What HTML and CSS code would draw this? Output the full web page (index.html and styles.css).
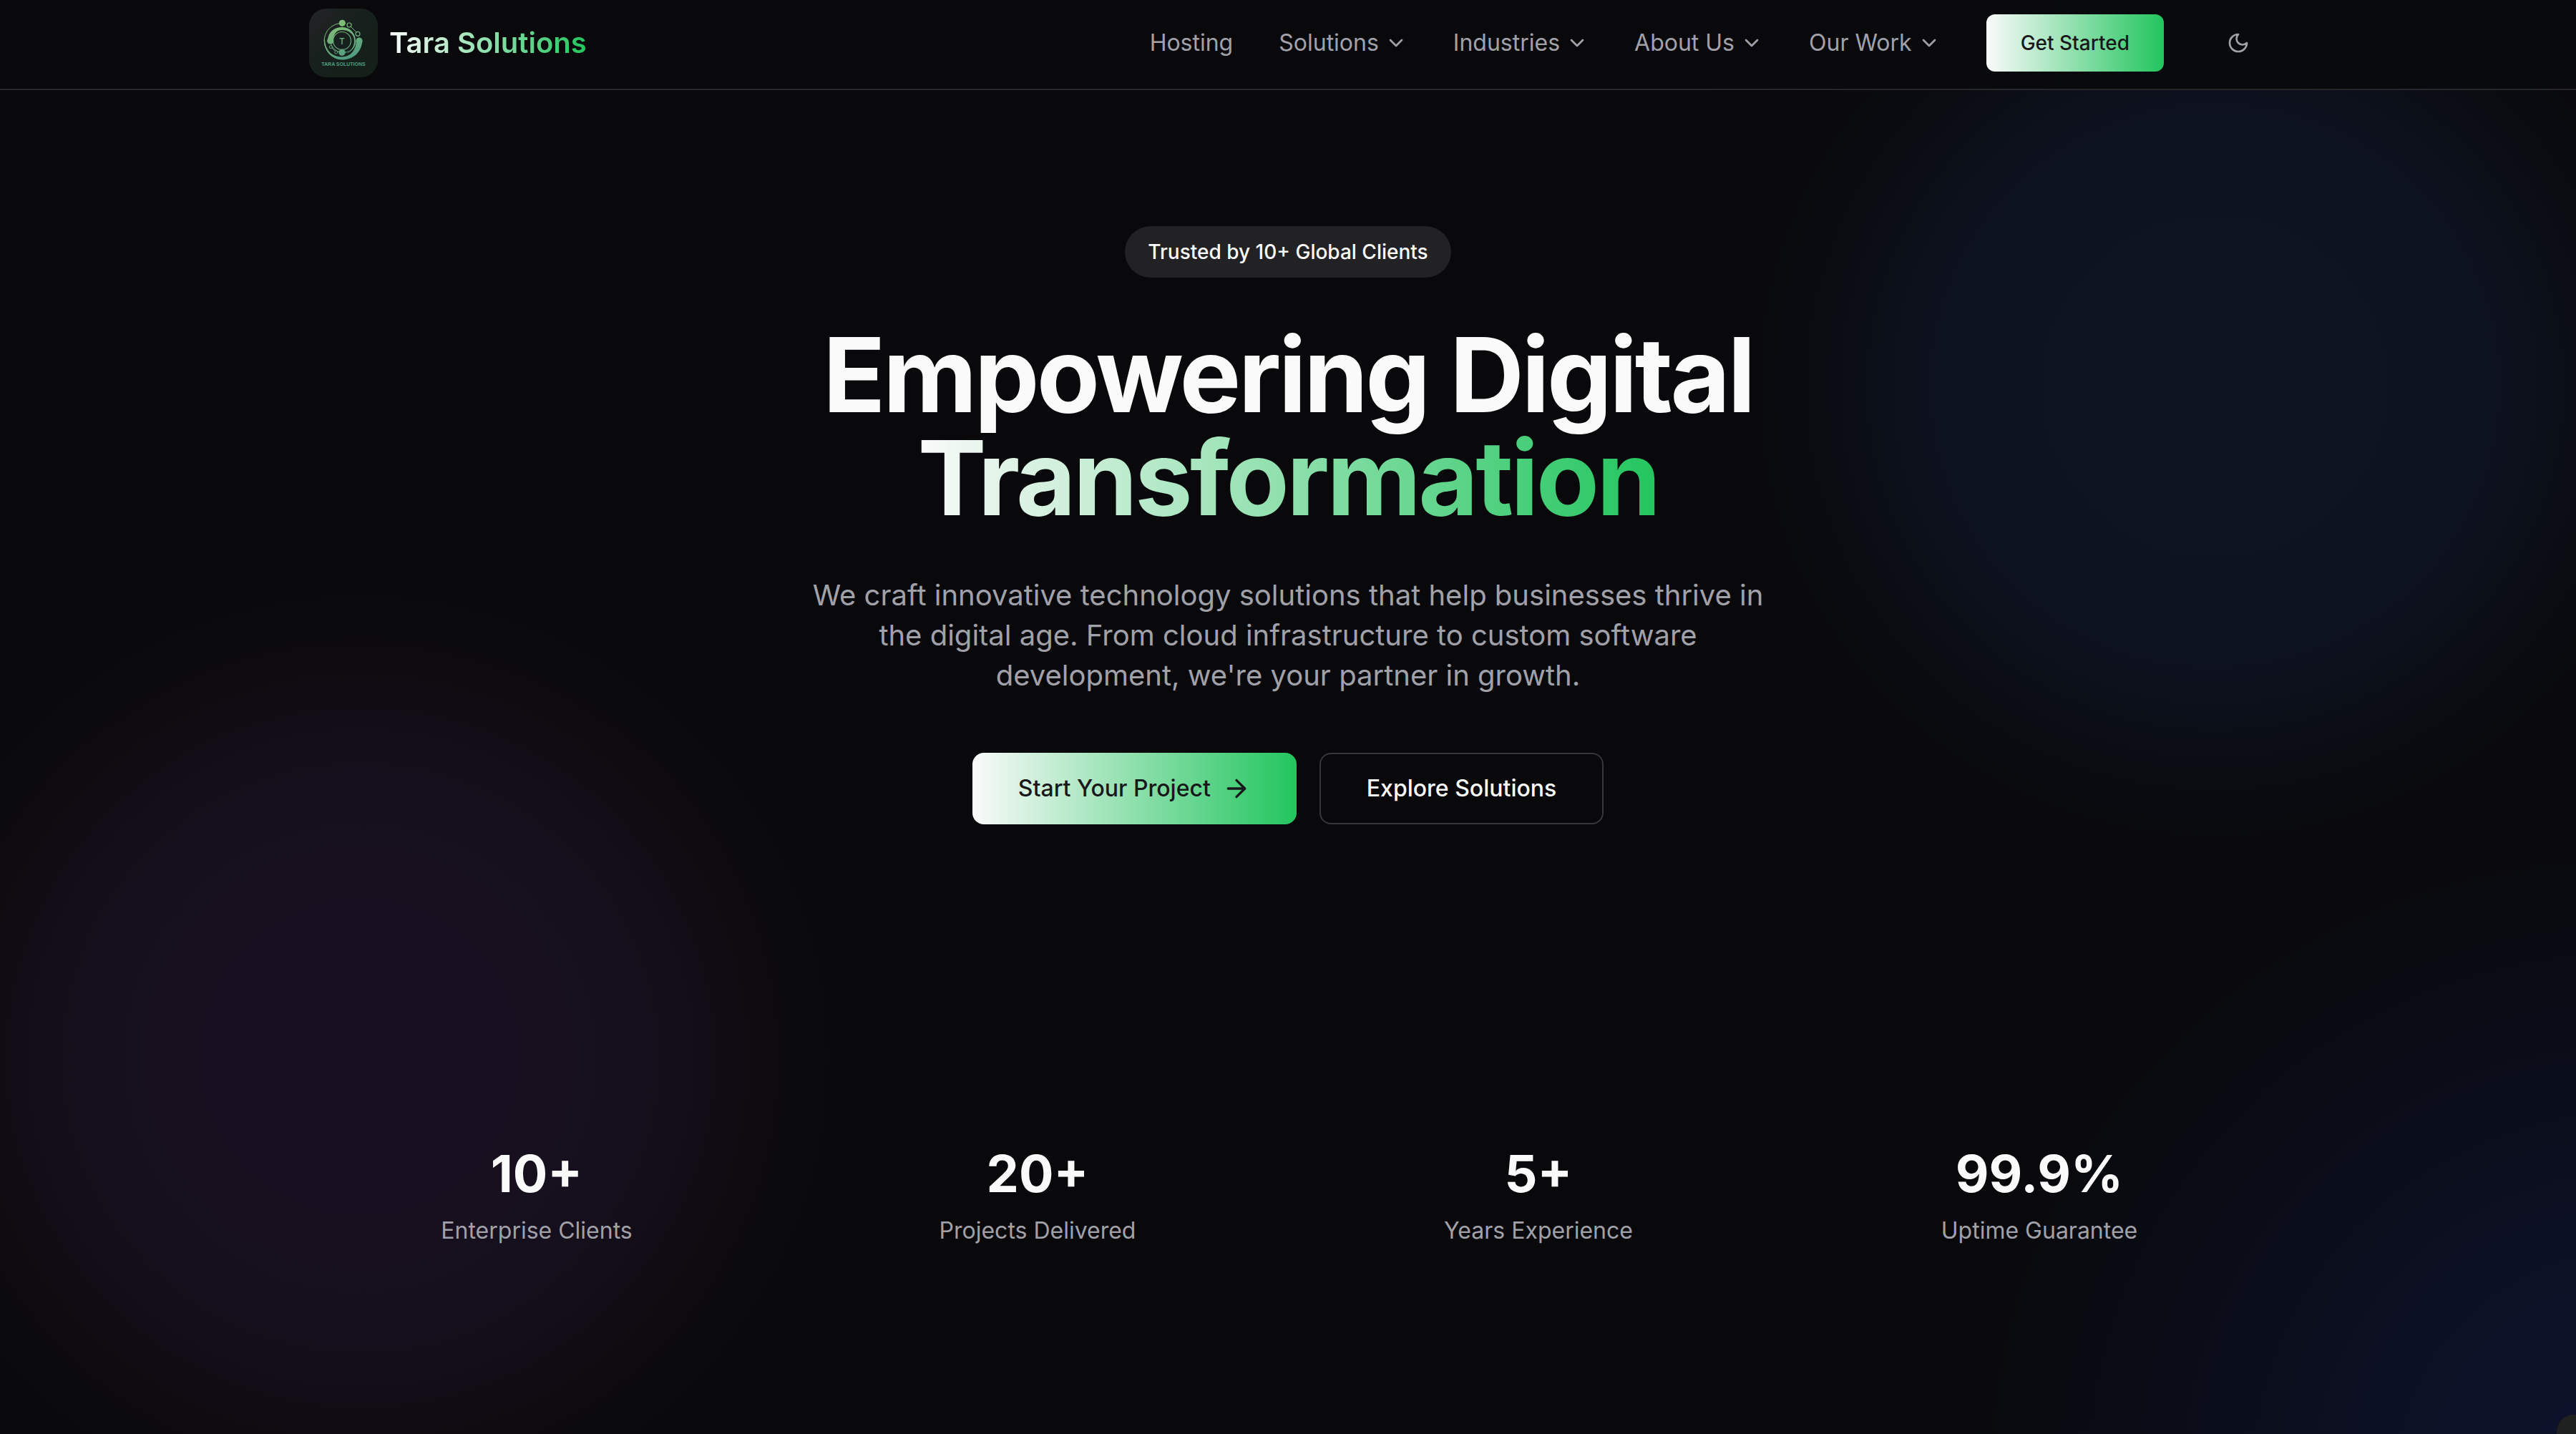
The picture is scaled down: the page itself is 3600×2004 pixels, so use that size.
FILE: index.html
```html
<!DOCTYPE html>
<html lang="en">
<head>
<meta charset="utf-8">
<meta name="viewport" content="width=device-width, initial-scale=1">
<title>Tara Solutions</title>
<link rel="stylesheet" href="styles.css">
</head>
<body>
<svg class="sprite" aria-hidden="true">
  <symbol id="chevron" viewBox="0 0 24 24"><path d="m6 9 6 6 6-6"/></symbol>
</svg>
<header class="header">
  <div class="container header-row">
    <a class="brand" href="#">
      <svg class="brand-logo" viewBox="0 0 96 96" role="img" aria-label="Tara Solutions logo">
        <defs>
          <linearGradient id="mark" gradientUnits="userSpaceOnUse" x1="34" y1="18" x2="54" y2="72">
            <stop offset="0" stop-color="#86bf77"/><stop offset="1" stop-color="#4f9a80"/>
          </linearGradient>
        </defs>
        <g fill="none" stroke="url(#mark)">
          <path stroke-width="1" d="M44 20.500A24.500 24.500 0 0 0 29 63"/>
          <path stroke-width="1" d="M46 61A16 16 0 0 0 65 45"/>
          <circle cx="46" cy="45" r="12.500" stroke-width="1.200"/>
          <path stroke-width="1" d="M30 45A16 16 0 0 0 46 61"/>
          <path stroke-width="1" d="m58 25 8 8"/>
          <path stroke-width="1" d="m32 55 4 4"/>
          <circle cx="56" cy="23" r="3" stroke-width="1.200"/>
          <circle cx="68" cy="35.300" r="3" stroke-width="1.200"/>
          <circle cx="30.300" cy="53.700" r="2" stroke-width="1"/>
          <circle cx="37.700" cy="61" r="2" stroke-width="1"/>
        </g>
        <g fill="url(#mark)">
          <path d="M26 45C26 33 35 26 46 26C57 26 65 34 65 45C65 53 60 60 52 63C59 59 63 53 63 45C63 36 56 30 46 30C38 30 34 36 33.500 45Z"/>
          <path d="M21 43C20 59 32 71.500 46 71.500C61 71.500 73 62 74.500 45L66 46C65 59 57 67.500 46 67.500C32 67.500 22.500 58 22 43Z"/>
          <circle cx="46.300" cy="20.300" r="4.600"/>
          <circle cx="70" cy="45" r="4.600"/>
          <circle cx="29.700" cy="45" r="4.600"/>
          <circle cx="46" cy="61.300" r="4.700"/>
          <text class="logo-letter" x="46" y="50" text-anchor="middle">T</text>
          <text class="logo-caption" x="48" y="80" text-anchor="middle">TARA SOLUTIONS</text>
        </g>
      </svg>
      <span class="brand-name gradient-text">Tara Solutions</span>
    </a>
    <nav class="nav" aria-label="Main">
      <a class="nav-item" href="#">Hosting</a>
      <button class="nav-item" type="button">Solutions<svg class="icon"><use href="#chevron"/></svg></button>
      <button class="nav-item" type="button">Industries<svg class="icon"><use href="#chevron"/></svg></button>
      <button class="nav-item" type="button">About Us<svg class="icon"><use href="#chevron"/></svg></button>
      <button class="nav-item" type="button">Our Work<svg class="icon"><use href="#chevron"/></svg></button>
      <a class="button button-small button-primary" href="#">Get Started</a>
      <button class="theme-toggle" type="button" aria-label="Toggle theme">
        <svg class="icon" viewBox="0 0 24 24"><path d="M12 3a6 6 0 0 0 9 9 9 9 0 1 1-9-9Z"/></svg>
      </button>
    </nav>
  </div>
</header>
<main class="hero">
  <section class="intro">
    <p class="badge">Trusted by 10+ Global Clients</p>
    <h1 class="title">Empowering Digital <span class="title-accent gradient-text">Transformation</span></h1>
    <p class="lead">We craft innovative technology solutions that help businesses thrive in the digital age. From cloud infrastructure to custom software development, we're your partner in growth.</p>
    <div class="actions">
      <a class="button button-primary" href="#">Start Your Project<svg class="icon icon-large" viewBox="0 0 24 24"><path d="M5 12h14"/><path d="m12 5 7 7-7 7"/></svg></a>
      <a class="button button-outline" href="#">Explore Solutions</a>
    </div>
  </section>
  <dl class="container stats">
    <div class="stat"><dt>Enterprise Clients</dt><dd>10+</dd></div>
    <div class="stat"><dt>Projects Delivered</dt><dd>20+</dd></div>
    <div class="stat"><dt>Years Experience</dt><dd>5+</dd></div>
    <div class="stat"><dt>Uptime Guarantee</dt><dd>99.9%</dd></div>
  </dl>
</main>
<div class="corner-widget"></div>
</body>
</html>
```
FILE: styles.css
```css
:root {
  --background: #09090b;
  --foreground: #fafafa;
  --muted: #a1a1aa;
  --border: #27272a;
  --brand-gradient: linear-gradient(to right, #fafafa, #22c55e);
}

* { box-sizing: border-box; }

body {
  margin: 0;
  min-height: 100vh;
  display: flex;
  flex-direction: column;
  overflow-x: hidden;
  background: var(--background);
  color: var(--foreground);
  font-family: Inter, "Liberation Sans", sans-serif;
  font-size: 32px;
  line-height: 48px;
}

a { color: inherit; text-decoration: none; }
button { font: inherit; color: inherit; background: none; border: 0; padding: 0; cursor: pointer; }
.sprite { display: none; }

.icon {
  width: 32px;
  height: 32px;
  flex: none;
  fill: none;
  stroke: currentColor;
  stroke-width: 2;
  stroke-linecap: round;
  stroke-linejoin: round;
}
.icon-large { width: 40px; height: 40px; }

.container {
  width: 100%;
  max-width: 2800px;
  margin: 0 auto;
  padding: 0 32px;
}

.gradient-text {
  background: var(--brand-gradient);
  background-clip: text;
  -webkit-background-clip: text;
  color: transparent;
}

.header {
  padding: 12px 0 16px;
  border-bottom: 2px solid var(--border);
  background: linear-gradient(to right, #09090b 65%, #090a0e 85%);
}
.header-row { display: flex; align-items: center; justify-content: space-between; }

.brand { display: flex; align-items: center; gap: 16px; }
.brand-logo {
  width: 96px;
  height: 96px;
  border-radius: 24px;
  background: linear-gradient(135deg, #232325, #17201d 45%, #132017);
}
.logo-letter { font: 500 12px Inter, sans-serif; }
.logo-caption { font: bold 7px "Liberation Sans", sans-serif; }
.brand-name { font-size: 40px; font-weight: 600; line-height: 56px; }

.nav { display: flex; align-items: center; gap: 64px; color: var(--muted); }
.nav-item { display: flex; align-items: center; gap: 8px; }
.theme-toggle { display: grid; place-items: center; width: 80px; height: 80px; }

.button {
  display: inline-flex;
  align-items: center;
  gap: 16px;
  height: 100px;
  padding: 0 64px;
  border-radius: 16px;
  font-weight: 500;
}
.button-small { height: 80px; padding: 0 48px; border-radius: 12px; font-size: 28px; }
.button-primary { background: var(--brand-gradient); color: #18181b; }
.button-outline { border: 2px solid #37373a; background: var(--background); }

.hero {
  flex: 1;
  padding: 190px 0 260px;
  background:
    radial-gradient(ellipse 19% 36% at 86% 22%, #0d1422 30%, rgb(13 20 34 / 80%) 60%, rgb(12 17 30 / 40%) 80%, rgb(10 13 22 / 0%)),
    radial-gradient(ellipse 19% 36% at 14% 72%, #181020 30%, rgb(24 16 32 / 80%) 60%, rgb(20 14 24 / 45%) 80%, rgb(14 11 16 / 0%)),
    radial-gradient(ellipse 27% 50% at 102% 103%, #0d122c, #0c1126 30%, #0a0d18 65%, transparent);
}

.intro { display: flex; flex-direction: column; align-items: center; text-align: center; padding: 0 32px; }
.badge {
  margin: 0;
  padding: 16px 32px;
  border-radius: 36px;
  background: #222224;
  font-size: 28px;
  font-weight: 500;
  line-height: 40px;
}
.title {
  margin: 64px 0;
  font-size: 144px;
  font-weight: 700;
  line-height: 144px;
  letter-spacing: -0.025em;
}
.title-accent { display: block; width: fit-content; margin: 0 auto; }
.lead { max-width: 1344px; margin: 0; color: var(--muted); font-size: 40px; line-height: 56px; }
.actions { display: flex; gap: 32px; margin-top: 80px; }

.stats {
  display: grid;
  grid-template-columns: repeat(4, 1fr);
  gap: 64px;
  margin-top: 448px;
}
.stat { display: flex; flex-direction: column-reverse; gap: 16px; text-align: center; }
.stat dt { color: var(--muted); }
.stat dd { margin: 0; font-size: 72px; font-weight: 700; line-height: 80px; }

.corner-widget {
  position: fixed;
  right: -69px;
  bottom: -69px;
  width: 96px;
  height: 96px;
  border-radius: 24px;
  background: #1e211f;
}
```
